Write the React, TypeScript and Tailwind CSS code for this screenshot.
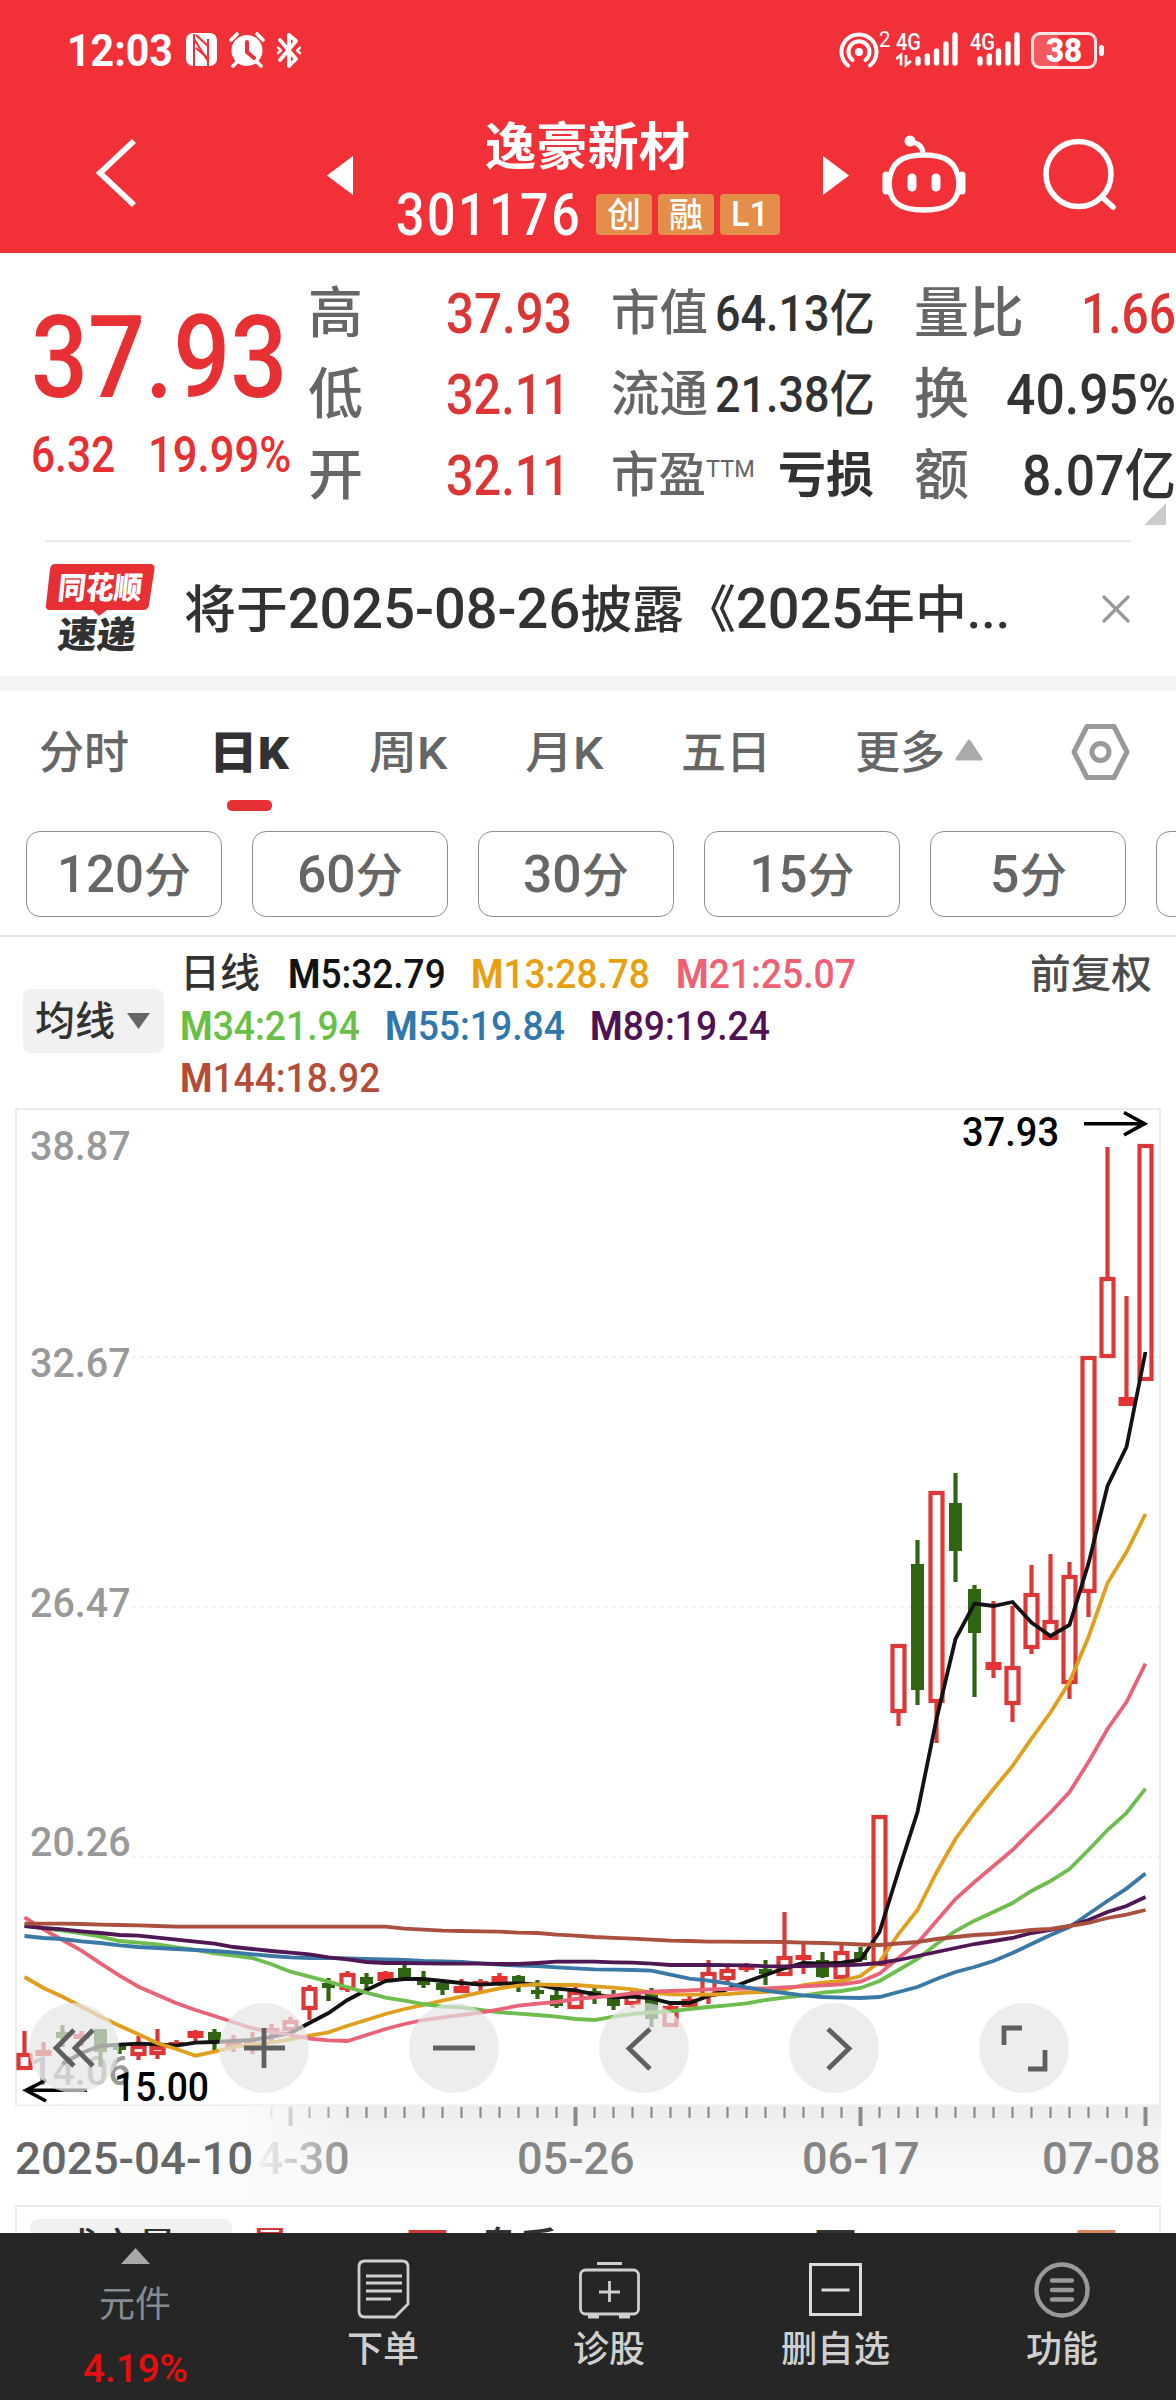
import { useLayoutEffect, useRef, useState } from 'react'
import type { ReactNode } from 'react'

interface FitProps {
  w: number
  className?: string
  children: ReactNode
}

// Condenses a single line of text so that it fills exactly `w` pixels
const Fit = ({ w, className = '', children }: FitProps) => {
  const ref = useRef<HTMLSpanElement>(null)
  const [scale, setScale] = useState(1)

  useLayoutEffect(() => {
    if (ref.current) setScale(w / ref.current.offsetWidth)
  }, [w])

  return (
    <span className={`block shrink-0 whitespace-nowrap leading-none ${className}`} style={{ width: w }}>
      <span ref={ref} className="inline-block origin-left" style={{ transform: `scaleX(${scale})` }}>
        {children}
      </span>
    </span>
  )
}

type Candle = [kind: 'r' | 'R' | 'g', high: number, top: number, bottom: number, low: number]

// r = hollow up, R = solid up, g = down
const candles: Candle[] = [
  ['r', 2031, 2053, 2070, 2070], ['R', 2042, 2050, 2056, 2056], ['g', 2025, 2032, 2038, 2047],
  ['R', 2031, 2034, 2039, 2046], ['g', 2029, 2029, 2052, 2067], ['g', 2044, 2045, 2050, 2054],
  ['r', 2036, 2045, 2056, 2060], ['r', 2029, 2046, 2055, 2059], ['R', 2040, 2042, 2045, 2045],
  ['R', 2030, 2031, 2038, 2042], ['g', 2029, 2032, 2043, 2050], ['R', 2035, 2041, 2047, 2052],
  ['R', 2032, 2042, 2048, 2054], ['R', 2024, 2028, 2033, 2041], ['r', 2017, 2020, 2031, 2031],
  ['r', 1985, 1987, 2010, 2020], ['g', 1978, 1983, 1988, 2001], ['r', 1971, 1973, 1990, 1992],
  ['g', 1973, 1977, 1984, 1992], ['R', 1971, 1972, 1981, 1981], ['g', 1965, 1968, 1979, 1981],
  ['g', 1971, 1981, 1985, 1988], ['g', 1979, 1983, 1990, 1995], ['R', 1979, 1986, 1993, 1993],
  ['R', 1979, 1981, 1984, 1992], ['R', 1973, 1976, 1983, 1986], ['g', 1975, 1976, 1983, 1992],
  ['g', 1980, 1990, 1994, 1999], ['g', 1990, 1995, 2006, 2008], ['r', 1987, 1991, 2009, 2009],
  ['g', 1988, 1991, 1996, 2004], ['g', 1990, 1997, 2006, 2010], ['r', 1990, 1993, 2005, 2008],
  ['g', 1988, 1994, 2019, 2027], ['r', 2001, 2006, 2027, 2027], ['r', 1995, 1999, 2007, 2007],
  ['r', 1960, 1972, 1997, 2004], ['r', 1966, 1969, 1980, 1982], ['R', 1963, 1967, 1970, 1972],
  ['g', 1960, 1969, 1974, 1985], ['r', 1912, 1956, 1976, 1976], ['R', 1944, 1955, 1960, 1974],
  ['g', 1952, 1960, 1977, 1978], ['r', 1944, 1951, 1979, 1979], ['g', 1947, 1952, 1960, 1960],
  ['r', 1815, 1815, 1966, 1966], ['r', 1644, 1644, 1713, 1726], ['g', 1540, 1564, 1690, 1705],
  ['r', 1491, 1491, 1703, 1743], ['g', 1473, 1503, 1551, 1582], ['g', 1585, 1589, 1633, 1697],
  ['R', 1601, 1662, 1670, 1678], ['r', 1606, 1666, 1705, 1722], ['r', 1565, 1593, 1649, 1654],
  ['r', 1554, 1620, 1640, 1640], ['r', 1562, 1575, 1684, 1699], ['r', 1356, 1356, 1593, 1617],
  ['r', 1147, 1277, 1358, 1358], ['R', 1296, 1397, 1406, 1406], ['r', 1144, 1144, 1381, 1381],
]

interface Average {
  color: string
  from: number
  ys: number[]
}

const averages: Average[] = [
  {
    color: '#131313',
    from: 2,
    ys: [2064, 2053, 2046, 2044.7, 2043.7, 2044.3, 2045.7, 2042.7, 2042, 2041, 2040, 2037, 2033, 2023, 2013, 2000,
      1990, 1981, 1979, 1979, 1981, 1983, 1984.7, 1983.7, 1983.3, 1984.7, 1988.7, 1990.3, 1994.3, 1997.3, 1996.7,
      1998.3, 2003, 2003, 1996, 1989.3, 1981.7, 1975, 1968.3, 1963, 1963.7, 1962.7, 1960, 1932, 1871, 1812, 1719,
      1639, 1603.6, 1606, 1602, 1622.5, 1636, 1625, 1563.6, 1486, 1447, 1352],
  },
  {
    color: '#e09f1f',
    from: 0,
    ys: [1977, 1988, 1996.7, 2006.7, 2016.7, 2025.7, 2034.3, 2043.3, 2049, 2055.7, 2051.7, 2047, 2044.3, 2042.3, 2039.3,
      2035.7, 2032.3, 2025.7, 2020, 2014, 2009, 2005, 2000.7, 1996.7, 1992.3, 1988.3, 1985.7, 1984.3, 1985, 1985,
      1986.3, 1987.7, 1989.3, 1992.7, 1994.3, 1994.7, 1994.7, 1994, 1992.7, 1992, 1989.3, 1985, 1982.7, 1981, 1976,
      1962, 1934, 1910, 1872.5, 1839, 1813, 1789, 1766, 1738.6, 1712.5, 1682, 1637, 1583, 1552, 1514],
  },
  {
    color: '#6fbc4f',
    from: 0,
    ys: [1925.7, 1928.3, 1930.7, 1933.3, 1936.7, 1941, 1942.7, 1944.3, 1947.3, 1950, 1953.3, 1955.7, 1958, 1964.3, 1971.7,
      1976.7, 1981.7, 1987.3, 1992.7, 1997.7, 2000.7, 2004, 2006.7, 2007.3, 2010, 2012.3, 2013.7, 2015, 2016.7, 2019,
      2020, 2016.7, 2014, 2012.3, 2011.3, 2009, 2007, 2005.3, 2003.3, 2000, 1997.7, 1995.7, 1992.7, 1991, 1988, 1981,
      1970, 1959, 1944, 1931, 1920.7, 1912, 1903, 1891, 1881, 1869, 1850, 1830, 1813, 1788.6],
  },
  {
    color: '#e96378',
    from: 0,
    ys: [1917.3, 1929.3, 1940, 1950.7, 1963.3, 1975.7, 1986.7, 1995, 2003.3, 2010, 2016, 2022.3, 2028.3, 2031.7, 2035,
      2038.7, 2040.3, 2041, 2035, 2029, 2024, 2020, 2017.3, 2015, 2012.7, 2009.3, 2005.7, 2003.7, 2002, 1999, 1997.3,
      1995.7, 1993.3, 1991.7, 1991, 1990.3, 1989.3, 1989, 1988.7, 1988.3, 1987.3, 1986.3, 1985.3, 1984.3, 1981.7,
      1973.6, 1958, 1943, 1921, 1899, 1882, 1866, 1850, 1831, 1812.5, 1792, 1762, 1729, 1702, 1663.6],
  },
  {
    color: '#3a78a6',
    from: 0,
    ys: [1936, 1938, 1939, 1941.3, 1943, 1945.3, 1947, 1948, 1949, 1950, 1951, 1952.3, 1954.3, 1956, 1957.3, 1958, 1958,
      1958.3, 1959, 1959.3, 1960, 1961, 1961.3, 1962, 1963.3, 1964.7, 1965.7, 1966, 1967.3, 1968.3, 1969.3, 1969.7,
      1970, 1970.7, 1974.7, 1978.7, 1980.7, 1983.3, 1987.3, 1990.7, 1993, 1995.3, 1997, 1997.7, 1998, 1997, 1992,
      1987, 1979, 1972, 1967, 1961, 1953, 1944, 1935, 1927, 1914, 1901, 1888.6, 1873.6],
  },
  {
    color: '#4f1754',
    from: 0,
    ys: [1926, 1928, 1929.3, 1931.3, 1933, 1935, 1935.7, 1937.7, 1939.7, 1941.7, 1943.7, 1947, 1949, 1951, 1952.7, 1954.3,
      1957.3, 1959.3, 1962, 1963, 1963, 1963.3, 1963.7, 1963.7, 1963.7, 1964, 1964, 1963, 1961.7, 1961.7, 1961.7,
      1962.3, 1962.7, 1963.7, 1965, 1965, 1965, 1965.2, 1965.3, 1966.3, 1966.3, 1966, 1965.7, 1965.3, 1964.7, 1963,
      1960, 1956, 1952, 1948, 1944, 1941, 1938, 1933, 1930, 1926, 1920, 1912, 1906, 1897],
  },
  {
    color: '#a9503f',
    from: 0,
    ys: [1923.7, 1923.7, 1923.7, 1924, 1924.7, 1925, 1925.3, 1926, 1926.7, 1926.7, 1926.7, 1926.7, 1926.7, 1926.7, 1926.7,
      1926.7, 1926.7, 1926.7, 1926.7, 1926.7, 1928.7, 1929.7, 1930.7, 1931, 1931.3, 1931.7, 1932.7, 1933, 1934.7,
      1935.7, 1937, 1937.8, 1938.7, 1939.7, 1940.7, 1941, 1941.7, 1941.7, 1941.8, 1941.9, 1942, 1942.7, 1943, 1943.7,
      1944.5, 1945, 1943.5, 1942, 1939, 1937, 1935, 1934, 1932, 1930, 1929, 1926, 1923, 1918, 1914.6, 1910],
  },
]

const barX = (i: number) => 24.5 + i * 19

const CandleMark = ({ candle, i }: { candle: Candle; i: number }) => {
  const [kind, high, top, bottom, low] = candle
  const x = barX(i)
  const color = kind === 'g' ? '#2f6513' : '#dc3838'

  return (
    <g stroke={color} strokeWidth={4.200} fill="none">
      {high < top && <path d={`M${x} ${high}V${top + 1}`} />}
      {low > bottom && <path d={`M${x} ${bottom - 1}V${low}`} />}
      {kind === 'r' && <rect x={x - 6} y={top + 2} width={12} height={bottom - top - 4} />}
      {kind === 'R' && <rect x={x - 8} y={top} width={16} height={bottom - top} fill="#e63232" stroke="none" />}
      {kind === 'g' && <rect x={x - 6.5} y={top} width={13} height={bottom - top} fill={color} stroke="none" />}
    </g>
  )
}

const KLineChart = () => (
  <svg className="block h-[998px] w-[1146px]" viewBox="15 1108 1146 998" fill="none">
    <rect x={16} y={1109} width={1144} height={996.5} stroke="#ececec" strokeWidth={2} />
    {[1357, 1607, 1857].map((y) => (
      <path key={y} d={`M132 ${y}H1160`} stroke="#ebebeb" strokeWidth={1.5} strokeDasharray="4 4" />
    ))}
    {candles.map((c, i) => (
      <CandleMark key={i} candle={c} i={i} />
    ))}
    {averages.map((a) => (
      <polyline
        key={a.color}
        points={a.ys.map((y, i) => `${barX(i + a.from)},${y}`).join(' ')}
        stroke={a.color}
        strokeWidth={3.8}
      />
    ))}
    <path d="M1084 1123.700H1144M1124 1112.500L1144.500 1123.700L1124 1135" stroke="#000" strokeWidth={3.6} />
    <path d="M87 2090.300H26M46 2080L26 2090.300L46 2101" stroke="#000" strokeWidth={3.6} />
  </svg>
)

const priceLabels = [
  { text: '38.87', place: 'top-[18px]' },
  { text: '32.67', place: 'top-[235px]' },
  { text: '26.47', place: 'top-[475px]' },
  { text: '20.26', place: 'top-[714px]' },
  { text: '14.06', place: 'top-[943px]' },
]

const chartButtons = [
  'M45 27L27 45L45 63M64 27L46 45L64 63',
  'M45 25V65M25 45H66',
  'M24 45H66',
  'M51 26L30 45.500L51 66',
  'M39 26L60 45.500L39 66',
  'M43 25H25V42M49 66H66V47',
]

const Signal = ({ data }: { data?: boolean }) => (
  <svg className="h-[36px] w-[62px]" viewBox="0 0 62 36" fill="none" stroke="#fff" strokeWidth={5.4} strokeLinecap="round">
    <path d={data ? 'M22 27V31' : 'M10 27V31'} />
    <path d={data ? 'M31.300 24V31' : 'M19.300 24V31'} />
    <path d={data ? 'M40.500 19V31' : 'M28.500 19V31'} />
    <path d={data ? 'M50 12V31' : 'M38 12V31'} />
    <path d={data ? 'M59 3V31' : 'M47 3V31'} />
    {data && <path d="M0 27L5 23V33.500M15 29L10 33V23" strokeWidth={2.6} strokeLinecap="butt" />}
  </svg>
)

const StatusBar = () => (
  <div className="flex h-[100px] items-center pl-[67px] text-white">
    <Fit w={106} className="text-[45px] font-bold">12:03</Fit>
    {/* NFC */}
    <svg className="ml-[13px] h-[34px] w-[32px]" viewBox="0 0 32 34">
      <rect x={0} y={0} width={31} height={33} rx={7} fill="#fff" />
      <path d="M8 1L8 33M8 6L22 28V18M22 33V6" fill="none" stroke="#f23038" strokeWidth={2} />
      <path d="M10 2L23 14M10 15L23 26" stroke="#f23038" strokeWidth={2.200} />
    </svg>
    {/* Alarm */}
    <svg className="ml-[11px] h-[36px] w-[36px]" viewBox="0 0 36 36" fill="none" stroke="#fff" strokeWidth={3.6} strokeLinecap="round">
      <circle cx={18} cy={18.500} r={15.500} fill="#fff" stroke="none" />
      <path d="M2 8L8 2M34 8L28 2M8 30L4 34M28 30L32 34" />
      <path d="M18 10V20L25 26" stroke="#f23038" strokeWidth={4} />
    </svg>
    {/* Bluetooth */}
    <svg className="ml-[11px] h-[37px] w-[26px]" viewBox="0 0 26 37" fill="none" stroke="#fff" strokeWidth={3.8} strokeLinejoin="round" strokeLinecap="round">
      <path d="M4 8L20 27L13 34V3L20 9L4 28" />
      <path d="M2 15.500L5 18.500L2 21M24 15.500L21 18.500L24 21" strokeWidth={2.4} />
    </svg>

    {/* Hotspot */}
    <svg className="ml-[537px] h-[36px] w-[40px]" viewBox="0 0 40 36" fill="none" stroke="#fff" strokeWidth={4} strokeLinecap="round">
      <circle cx={20} cy={20} r={4} fill="#fff" stroke="none" />
      <path d="M13.500 28A10.500 10.500 0 1 1 26.500 28" />
      <path d="M9 33.500A17.500 17.500 0 1 1 31 33.500" />
    </svg>
    <Fit w={11} className="mb-[20px] text-[22px]">2</Fit>
    <div className="relative ml-[6px]">
      <Signal data />
      <Fit w={25} className="absolute -top-[2px] left-0 text-[24px] font-medium">4G</Fit>
    </div>
    <div className="relative ml-[12px]">
      <Signal />
      <Fit w={25} className="absolute -top-[2px] left-0 text-[24px] font-medium">4G</Fit>
    </div>
    <div className="-ml-[1px] flex h-[37px] w-[66px] items-center justify-center rounded-[9px] border-[3px] border-white/85 bg-linear-to-r from-white/20 from-40% to-transparent to-40%">
      <Fit w={36} className="text-[33px] font-black">38</Fit>
    </div>
    <div className="ml-[2px] h-[11px] w-[5px] rounded-sm bg-white" />
  </div>
)

const TitleBar = () => (
  <div className="flex h-[153px] items-start text-white">
    <svg className="mt-[38px] ml-[96px] h-[70px] w-[41px]" viewBox="0 0 41 70" fill="none" stroke="#fff" strokeWidth={5.800}>
      <path d="M38 3L4 35L38 67" />
    </svg>
    <svg className="mt-[56px] ml-[190px] h-[39px] w-[26px]" viewBox="0 0 26 39" fill="#fff">
      <path d="M26 0V39L0 19.500Z" />
    </svg>
    <div className="ml-[43px] flex w-[427px] flex-col pt-[22px]">
      <Fit w={205} className="ml-[89px] text-[51px] font-bold">逸豪新材</Fit>
      <div className="mt-[12px] flex items-center">
        <Fit w={186} className="text-[59px] font-medium tracking-[3px]">301176</Fit>
        <div className="ml-[14px] flex gap-[6px]">
          <div className="flex h-[41px] w-[56px] items-center justify-center rounded bg-[#e38e49]">
            <Fit w={34} className="text-[34px] font-medium">创</Fit>
          </div>
          <div className="flex h-[41px] w-[56px] items-center justify-center rounded bg-[#e38e49]">
            <Fit w={34} className="text-[34px] font-medium">融</Fit>
          </div>
          <div className="flex h-[41px] w-[60px] items-center justify-center rounded bg-[#e38e49]">
            <Fit w={38} className="text-[35px] font-medium">L1</Fit>
          </div>
        </div>
      </div>
    </div>
    <svg className="mt-[56px] h-[39px] w-[26px]" viewBox="0 0 26 39" fill="#fff">
      <path d="M0 0V39L26 19.500Z" />
    </svg>
    {/* Assistant robot */}
    <svg className="mt-[34px] ml-[32px] h-[80px] w-[86px]" viewBox="0 0 86 80" fill="none" stroke="#fff" strokeWidth={5.400}>
      <path d="M43 21C65 21 76 28 78 48C78 68 68 76 43 76C18 76 8 68 8 48C10 28 21 21 43 21Z" />
      <path d="M5 41V57M81 41V57" strokeWidth={7} strokeLinecap="round" />
      <path d="M42 20C42 12 37 9 30 8" strokeWidth={5} />
      <circle cx={29} cy={7} r={5.500} fill="#fff" stroke="none" />
      <path d="M31 44V53M55 44V53" strokeWidth={9} strokeLinecap="round" />
    </svg>
    <svg className="mt-[38px] ml-[76px] h-[74px] w-[76px]" viewBox="0 0 76 74" fill="none" stroke="#fff" strokeWidth={5.600} strokeLinecap="round">
      <circle cx={35.500} cy={36} r={32.500} />
      <path d="M59 59L70 69" />
    </svg>
  </div>
)

const Quote = () => (
  <div className="relative flex h-[287px] font-medium text-[#323232]">
    <div className="w-[310px] shrink-0 pt-[47px] pl-[31px] text-[#e63033]">
      <Fit w={256} className="text-[115px]">37.93</Fit>
      <div className="mt-[15px] flex gap-[33px]">
        <Fit w={84} className="text-[50px]">6.32</Fit>
        <Fit w={143} className="text-[50px]">19.99%</Fit>
      </div>
    </div>

    <div className="flex w-[303px] shrink-0 flex-col pt-[20px]">
      {[['高', '37.93', 126], ['低', '32.11', 124], ['开', '32.11', 124]].map(([label, value, w], i) => (
        <div key={i} className="flex h-[81px] items-center">
          <Fit w={55} className="-ml-[2px] text-[55px] text-[#666]">{label}</Fit>
          <Fit w={Number(w)} className="ml-[83px] text-[56px] text-[#dc3535]">{value}</Fit>
        </div>
      ))}
    </div>

    <div className="flex w-[303px] shrink-0 flex-col pt-[20px]">
      <div className="flex h-[81px] items-center">
        <Fit w={97} className="-ml-[2px] text-[49px] text-[#666]">市值</Fit>
        <Fit w={160} className="ml-[7px] text-[50px]">64.13亿</Fit>
      </div>
      <div className="flex h-[81px] items-center">
        <Fit w={97} className="-ml-[2px] text-[49px] text-[#666]">流通</Fit>
        <Fit w={160} className="ml-[7px] text-[50px]">21.38亿</Fit>
      </div>
      <div className="flex h-[81px] items-center">
        <Fit w={95} className="-ml-[2px] text-[49px] text-[#666]">市盈</Fit>
        <Fit w={49} className="mb-[14px] text-[24px] font-normal text-[#666]">TTM</Fit>
        <Fit w={96} className="ml-[23px] text-[49px] font-bold">亏损</Fit>
      </div>
    </div>

    <div className="flex w-[260px] shrink-0 flex-col pt-[20px]">
      <div className="flex h-[81px] items-center justify-between">
        <Fit w={110} className="-ml-[2px] text-[55px] text-[#666]">量比</Fit>
        <Fit w={95} className="text-[56px] text-[#dc3535]">1.66</Fit>
      </div>
      <div className="flex h-[81px] items-center justify-between">
        <Fit w={55} className="-ml-[2px] text-[55px] text-[#666]">换</Fit>
        <Fit w={170} className="text-[56px]">40.95%</Fit>
      </div>
      <div className="flex h-[81px] items-center justify-between">
        <Fit w={55} className="-ml-[2px] text-[55px] text-[#666]">额</Fit>
        <Fit w={154} className="text-[56px]">8.07亿</Fit>
      </div>
    </div>
    <svg className="absolute right-[10px] bottom-[15px] h-[22px] w-[22px]" viewBox="0 0 22 22">
      <path d="M22 0V22H0Z" fill="#ccc" />
    </svg>
  </div>
)

const News = () => (
  <div className="mr-[45px] ml-[45px] flex h-[136px] border-t-2 border-[#ececec]">
    <div className="relative h-full w-[110px]">
      <svg className="absolute top-[22px] left-0 h-[52px] w-[110px]" viewBox="0 0 110 52">
        <path d="M10 0H105Q110 0 109.500 5L104 41Q103 46 98 46H62L54 52L48 46H5Q0 46 1 41L5 5Q6 0 10 0Z" fill="#e63033" />
      </svg>
      <Fit w={84} className="absolute top-[31px] left-[13px] -skew-x-6 text-[31px] font-black text-white">同花顺</Fit>
      <Fit w={78} className="absolute top-[75px] left-[13px] -skew-x-6 text-[37px] font-black text-[#323232]">速递</Fit>
    </div>
    <Fit w={826} className="mt-[40px] ml-[29px] text-[51px] font-medium text-[#323232]">
      将于<span className="text-[55px]">2025-08-26</span>披露《<span className="text-[55px]">2025</span>年中...
    </Fit>
    <svg className="mt-[52px] ml-[91px] h-[30px] w-[30px]" viewBox="0 0 30 30" stroke="#999" strokeWidth={3.400} strokeLinecap="round">
      <path d="M3 3L27 27M27 3L3 27" />
    </svg>
  </div>
)

const Tabs = () => (
  <div className="flex h-[140px] items-start pt-[40px] text-[45px] font-medium text-[#666]">
    <Fit w={90} className="ml-[39px]">分时</Fit>
    <div className="ml-[80px] flex flex-col items-center">
      <Fit w={80} className="font-black text-[#323232]">日K</Fit>
      <div className="mt-[24px] h-[11px] w-[45px] rounded-[5px] bg-[#e63033]" />
    </div>
    <Fit w={78} className="ml-[80px]">周K</Fit>
    <Fit w={78} className="ml-[78px]">月K</Fit>
    <Fit w={90} className="ml-[78px]">五日</Fit>
    <Fit w={90} className="ml-[84px]">更多</Fit>
    <svg className="mt-[8px] ml-[10px] h-[22px] w-[28px]" viewBox="0 0 28 22">
      <path d="M14 2L26 20H2Z" fill="#aaa" stroke="#aaa" strokeWidth={3} strokeLinejoin="round" />
    </svg>
    <svg className="-mt-[8px] ml-[88px] h-[58px] w-[59px]" viewBox="0 0 59 58" fill="none" stroke="#999" strokeWidth={5} strokeLinejoin="round">
      <path d="M16 3.500H43L56 29L43 54.500H16L3 29Z" />
      <circle cx={29.500} cy={29} r={8.500} />
    </svg>
  </div>
)

const minutes = [
  { label: '120', w: 134 },
  { label: '60', w: 106 },
  { label: '30', w: 106 },
  { label: '15', w: 105 },
  { label: '5', w: 77 },
  { label: '1', w: 76 },
]

const MinuteButtons = () => (
  <div className="flex h-[106px] gap-[30px] overflow-hidden border-b-2 border-[#e7e7e7] pl-[26px]">
    {minutes.map((m) => (
      <div key={m.label} className="flex h-[86px] w-[196px] shrink-0 items-center justify-center rounded-[14px] border border-[#8f8f8f] text-[#666]">
        <Fit w={m.w} className="text-[47px] font-medium">
          <span className="text-[51px]">{m.label}</span>分
        </Fit>
      </div>
    ))}
  </div>
)

const Legend = ({ name, value, w, className }: { name: string; value: string; w: number; className: string }) => (
  <Fit w={w} className={`text-[41px] ${className}`}>
    <span className="font-bold">M</span>
    <span className="font-medium">{name}:{value}</span>
  </Fit>
)

const Averages = () => (
  <div className="flex h-[171px]">
    <div className="mt-[52px] ml-[23px] flex h-[64px] w-[141px] items-center rounded-lg bg-[#f1f1f1]">
      <Fit w={80} className="mt-[2px] ml-[12px] text-[40px] font-medium text-[#323232]">均线</Fit>
      <svg className="ml-[12px] h-[16px] w-[23px]" viewBox="0 0 23 16">
        <path d="M0 0H23L11.500 16Z" fill="#666" />
      </svg>
    </div>
    <div className="ml-[16px] flex w-[830px] flex-col gap-[11px] pt-[17px]">
      <div className="flex">
        <Fit w={80} className="text-[40px] font-medium text-[#323232]">日线</Fit>
        <Legend name="5" value="32.79" w={158} className="ml-[28px] text-[#131313]" />
        <Legend name="13" value="28.78" w={179} className="ml-[25px] text-[#e89f10]" />
        <Legend name="21" value="25.07" w={180} className="ml-[26px] text-[#f05f74]" />
      </div>
      <div className="flex">
        <Legend name="34" value="21.94" w={180} className="text-[#6abf48]" />
        <Legend name="55" value="19.84" w={180} className="ml-[25px] text-[#3077ab]" />
        <Legend name="89" value="19.24" w={180} className="ml-[25px] text-[#4f1252]" />
      </div>
      <Legend name="144" value="18.92" w={200} className="text-[#b34d3a]" />
    </div>
    <Fit w={122} className="mt-[18px] ml-[20px] text-[40px] font-medium text-[#4c4c4c]">前复权</Fit>
  </div>
)

const ChartPanel = () => (
  <div className="relative ml-[15px] h-[998px] w-[1146px]">
    {priceLabels.map((p) => (
      <Fit key={p.text} w={101} className={`absolute left-[15px] text-[41px] font-medium text-[#999] ${p.place}`}>
        {p.text}
      </Fit>
    ))}
    <div className="relative">
      <KLineChart />
    </div>
    <Fit w={97} className="absolute top-[5px] left-[947px] text-[40px] font-medium text-black">37.93</Fit>
    <Fit w={95} className="absolute top-[960px] left-[99px] text-[40px] font-medium text-black">15.00</Fit>
    <div className="absolute top-[895px] left-[14px] flex gap-[100px]">
      {chartButtons.map((d) => (
        <div key={d} className="h-[90px] w-[90px] rounded-full bg-[#e5e5e5]/70">
          <svg className="h-full w-full" viewBox="0 0 90 90" fill="none" stroke="#5f5f5f" strokeWidth={4.800}>
            <path d={d} />
          </svg>
        </div>
      ))}
    </div>
  </div>
)

const TimeAxis = () => (
  <div className="relative ml-[15px] h-[99px] w-[1146px] bg-linear-to-b from-[#ededed] to-[#fafafa] to-75%">
    <svg className="absolute top-0 left-0 h-[21px] w-[1146px]" viewBox="15 2106 1146 21" stroke="#8a8a8a">
      {candles.map((_, i) => (
        <path key={i} d={`M${barX(i)} 2107V${i % 15 === 14 ? 2126 : 2118}`} strokeWidth={i % 15 === 14 ? 4 : 2.200} />
      ))}
    </svg>
    <div className="flex pt-[30px] text-[45px] font-medium text-[#858585]">
      <Fit w={118} className="ml-[217px]">04-30</Fit>
      <Fit w={118} className="ml-[167px]">05-26</Fit>
      <Fit w={118} className="ml-[167px]">06-17</Fit>
      <Fit w={119} className="ml-[122px]">07-08</Fit>
    </div>
    {/* Left fade under the start date */}
    <div className="absolute top-0 left-0 h-full w-[340px] bg-linear-to-r from-white from-0% via-[#fafafa] via-70% to-transparent" />
    <Fit w={238} className="absolute top-[30px] left-0 text-[45px] font-medium text-[#666]">2025-04-10</Fit>
  </div>
)

const VolumeHeader = () => (
  <div className="ml-[15px] flex h-[28px] w-[1146px] items-start overflow-hidden border-x-2 border-t-2 border-[#ececec] text-[#323232]">
    <div className="mt-[12px] ml-[13px] flex h-[60px] w-[202px] shrink-0 justify-center rounded-lg bg-[#f1f1f1]">
      <Fit w={118} className="mt-[10px] mr-[26px] text-[40px] font-medium">成交量</Fit>
    </div>
    <Fit w={40} className="mt-[21px] ml-[18px] text-[40px] font-medium text-[#d33838]">量</Fit>
    <Fit w={43} className="mt-[21px] ml-[116px] text-[40px] font-medium text-[#d33838]">万</Fit>
    <Fit w={80} className="mt-[21px] ml-[29px] text-[40px] font-medium">盘后</Fit>
    <Fit w={43} className="mt-[21px] ml-[256px] text-[40px] font-medium">万</Fit>
    <Fit w={43} className="mt-[21px] ml-[218px] text-[40px] font-medium text-[#d98a5f]">万</Fit>
  </div>
)

const BottomNav = () => (
  <div className="flex h-[167px] bg-[#262626] text-[36px] font-medium text-[#cfcfcf]">
    <div className="flex w-[270px] flex-col items-center pt-[15px]">
      <svg className="h-[16px] w-[29px]" viewBox="0 0 29 16">
        <path d="M14.500 0L29 16H0Z" fill="#a8a8a8" />
      </svg>
      <Fit w={72} className="mt-[23px] font-normal text-[#838c93]">元件</Fit>
      <Fit w={105} className="mt-[27px] text-[39px] text-[#e60f0f]">4.19%</Fit>
    </div>
    <div className="flex w-[226px] flex-col items-center pt-[26px]">
      <svg className="h-[60px] w-[53px]" viewBox="0 0 53 60" fill="none" stroke="#cfcfcf" strokeWidth={2.800}>
        <path d="M8 2H45Q51 2 51 8V45L38 58H8Q2 58 2 52V8Q2 2 8 2Z" />
        <path d="M9 17H45M9 24H45M9 32H45M9 40H34" />
      </svg>
      <Fit w={72} className="mt-[13px]">下单</Fit>
    </div>
    <div className="flex w-[226px] flex-col items-center pt-[28px]">
      <svg className="h-[58px] w-[61px]" viewBox="0 0 61 58" fill="none" stroke="#cfcfcf" strokeWidth={2.800}>
        <rect x={1.500} y={9} width={58} height={44} rx={5} />
        <path d="M18 2.500H43M30.500 20V41M20 31H41" />
        <path d="M9 55.500H20M40 55.500H51" strokeWidth={4} />
      </svg>
      <Fit w={72} className="mt-[13px]">诊股</Fit>
    </div>
    <div className="flex w-[226px] flex-col items-center pt-[30px]">
      <svg className="h-[53px] w-[53px]" viewBox="0 0 53 53" fill="none" stroke="#dcdcdc" strokeWidth={3}>
        <rect x={1.500} y={1.500} width={50} height={50} />
        <path d="M12.500 27H40.500" />
      </svg>
      <Fit w={109} className="mt-[16px]">删自选</Fit>
    </div>
    <div className="flex w-[228px] flex-col items-center pt-[29px]">
      <svg className="h-[56px] w-[56px]" viewBox="0 0 56 56" fill="none" stroke="#999" strokeWidth={4.400}>
        <circle cx={28} cy={28} r={25.500} />
        <path d="M18 18.500H38M18 28H38M18 37.500H38" strokeLinecap="round" />
      </svg>
      <Fit w={72} className="mt-[14px]">功能</Fit>
    </div>
  </div>
)

const App = () => {
  return (
    <div className="h-[2400px] w-[1176px] overflow-hidden bg-white font-['Roboto','Noto_Sans_CJK_SC',sans-serif]">
      <div className="h-[253px] bg-[#f23038]">
        <StatusBar />
        <TitleBar />
      </div>
      <Quote />
      <News />
      <div className="h-[15px] bg-[#f4f4f4]" />
      <Tabs />
      <MinuteButtons />
      <Averages />
      <ChartPanel />
      <TimeAxis />
      <VolumeHeader />
      <BottomNav />
    </div>
  )
}

export default App
